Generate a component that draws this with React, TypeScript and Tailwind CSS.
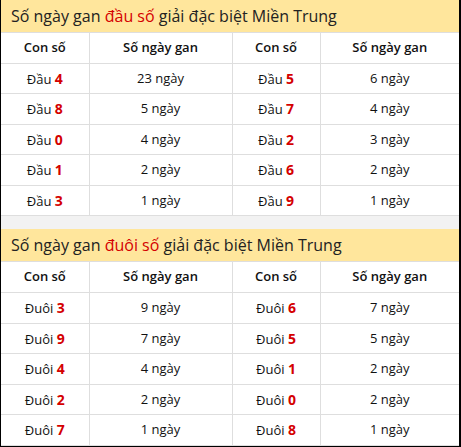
const sections = [
  {
    label: 'đầu số',
    prefix: 'Đầu',
    rows: [
      ['4', '23 ngày', '5', '6 ngày'],
      ['8', '5 ngày', '7', '4 ngày'],
      ['0', '4 ngày', '2', '3 ngày'],
      ['1', '2 ngày', '6', '2 ngày'],
      ['3', '1 ngày', '9', '1 ngày'],
    ],
  },
  {
    label: 'đuôi số',
    prefix: 'Đuôi',
    rows: [
      ['3', '9 ngày', '6', '7 ngày'],
      ['9', '7 ngày', '5', '5 ngày'],
      ['4', '4 ngày', '1', '2 ngày'],
      ['2', '2 ngày', '0', '2 ngày'],
      ['7', '1 ngày', '8', '1 ngày'],
    ],
  },
];

function GanTable({ label, prefix, rows }: { label: string; prefix: string; rows: string[][] }) {
  return (
    <div>
      <div className="h-[33px] flex items-center pl-[10px] bg-[#ffe69c] border-b border-[#dedede] text-[16px] text-[#222]">
        Số ngày gan&nbsp;<span className="text-[#d40000]">{label}</span>&nbsp;giải đặc biệt Miền Trung
      </div>
      <table className="w-full border-collapse table-fixed text-[13px] text-[#111]">
        <colgroup>
          <col className="w-[88px]" />
          <col className="w-[143px]" />
          <col className="w-[88px]" />
          <col />
        </colgroup>
        <thead>
          <tr className="h-[30px] text-[13px]">
            <th className="border-r border-b border-[#dedede] font-semibold">Con số</th>
            <th className="border-r border-b border-[#dedede] font-semibold">Số ngày gan</th>
            <th className="border-r border-b border-[#dedede] font-semibold">Con số</th>
            <th className="border-b border-[#dedede] font-semibold">Số ngày gan</th>
          </tr>
        </thead>
        <tbody>
          {rows.map((r, i) => (
            <tr key={i} className="h-[30.6px] text-center">
              <td className="border-r border-b border-[#dedede]">
                {prefix} <b className="text-[#d40000] text-[14px]">{r[0]}</b>
              </td>
              <td className="border-r border-b border-[#dedede]">{r[1]}</td>
              <td className="border-r border-b border-[#dedede]">
                {prefix} <b className="text-[#d40000] text-[14px]">{r[2]}</b>
              </td>
              <td className="border-b border-[#dedede]">{r[3]}</td>
            </tr>
          ))}
        </tbody>
      </table>
    </div>
  );
}

export default function App() {
  return (
    <div
      className="w-[461px] h-[447px] overflow-hidden bg-white border-l border-r-2 border-b border-black"
      style={{ fontFamily: '"Open Sans", "Noto Sans", sans-serif' }}
    >
      <GanTable {...sections[0]} />
      <div className="h-[13px] bg-[#f2f2f2]" />
      <GanTable {...sections[1]} />
    </div>
  );
}
